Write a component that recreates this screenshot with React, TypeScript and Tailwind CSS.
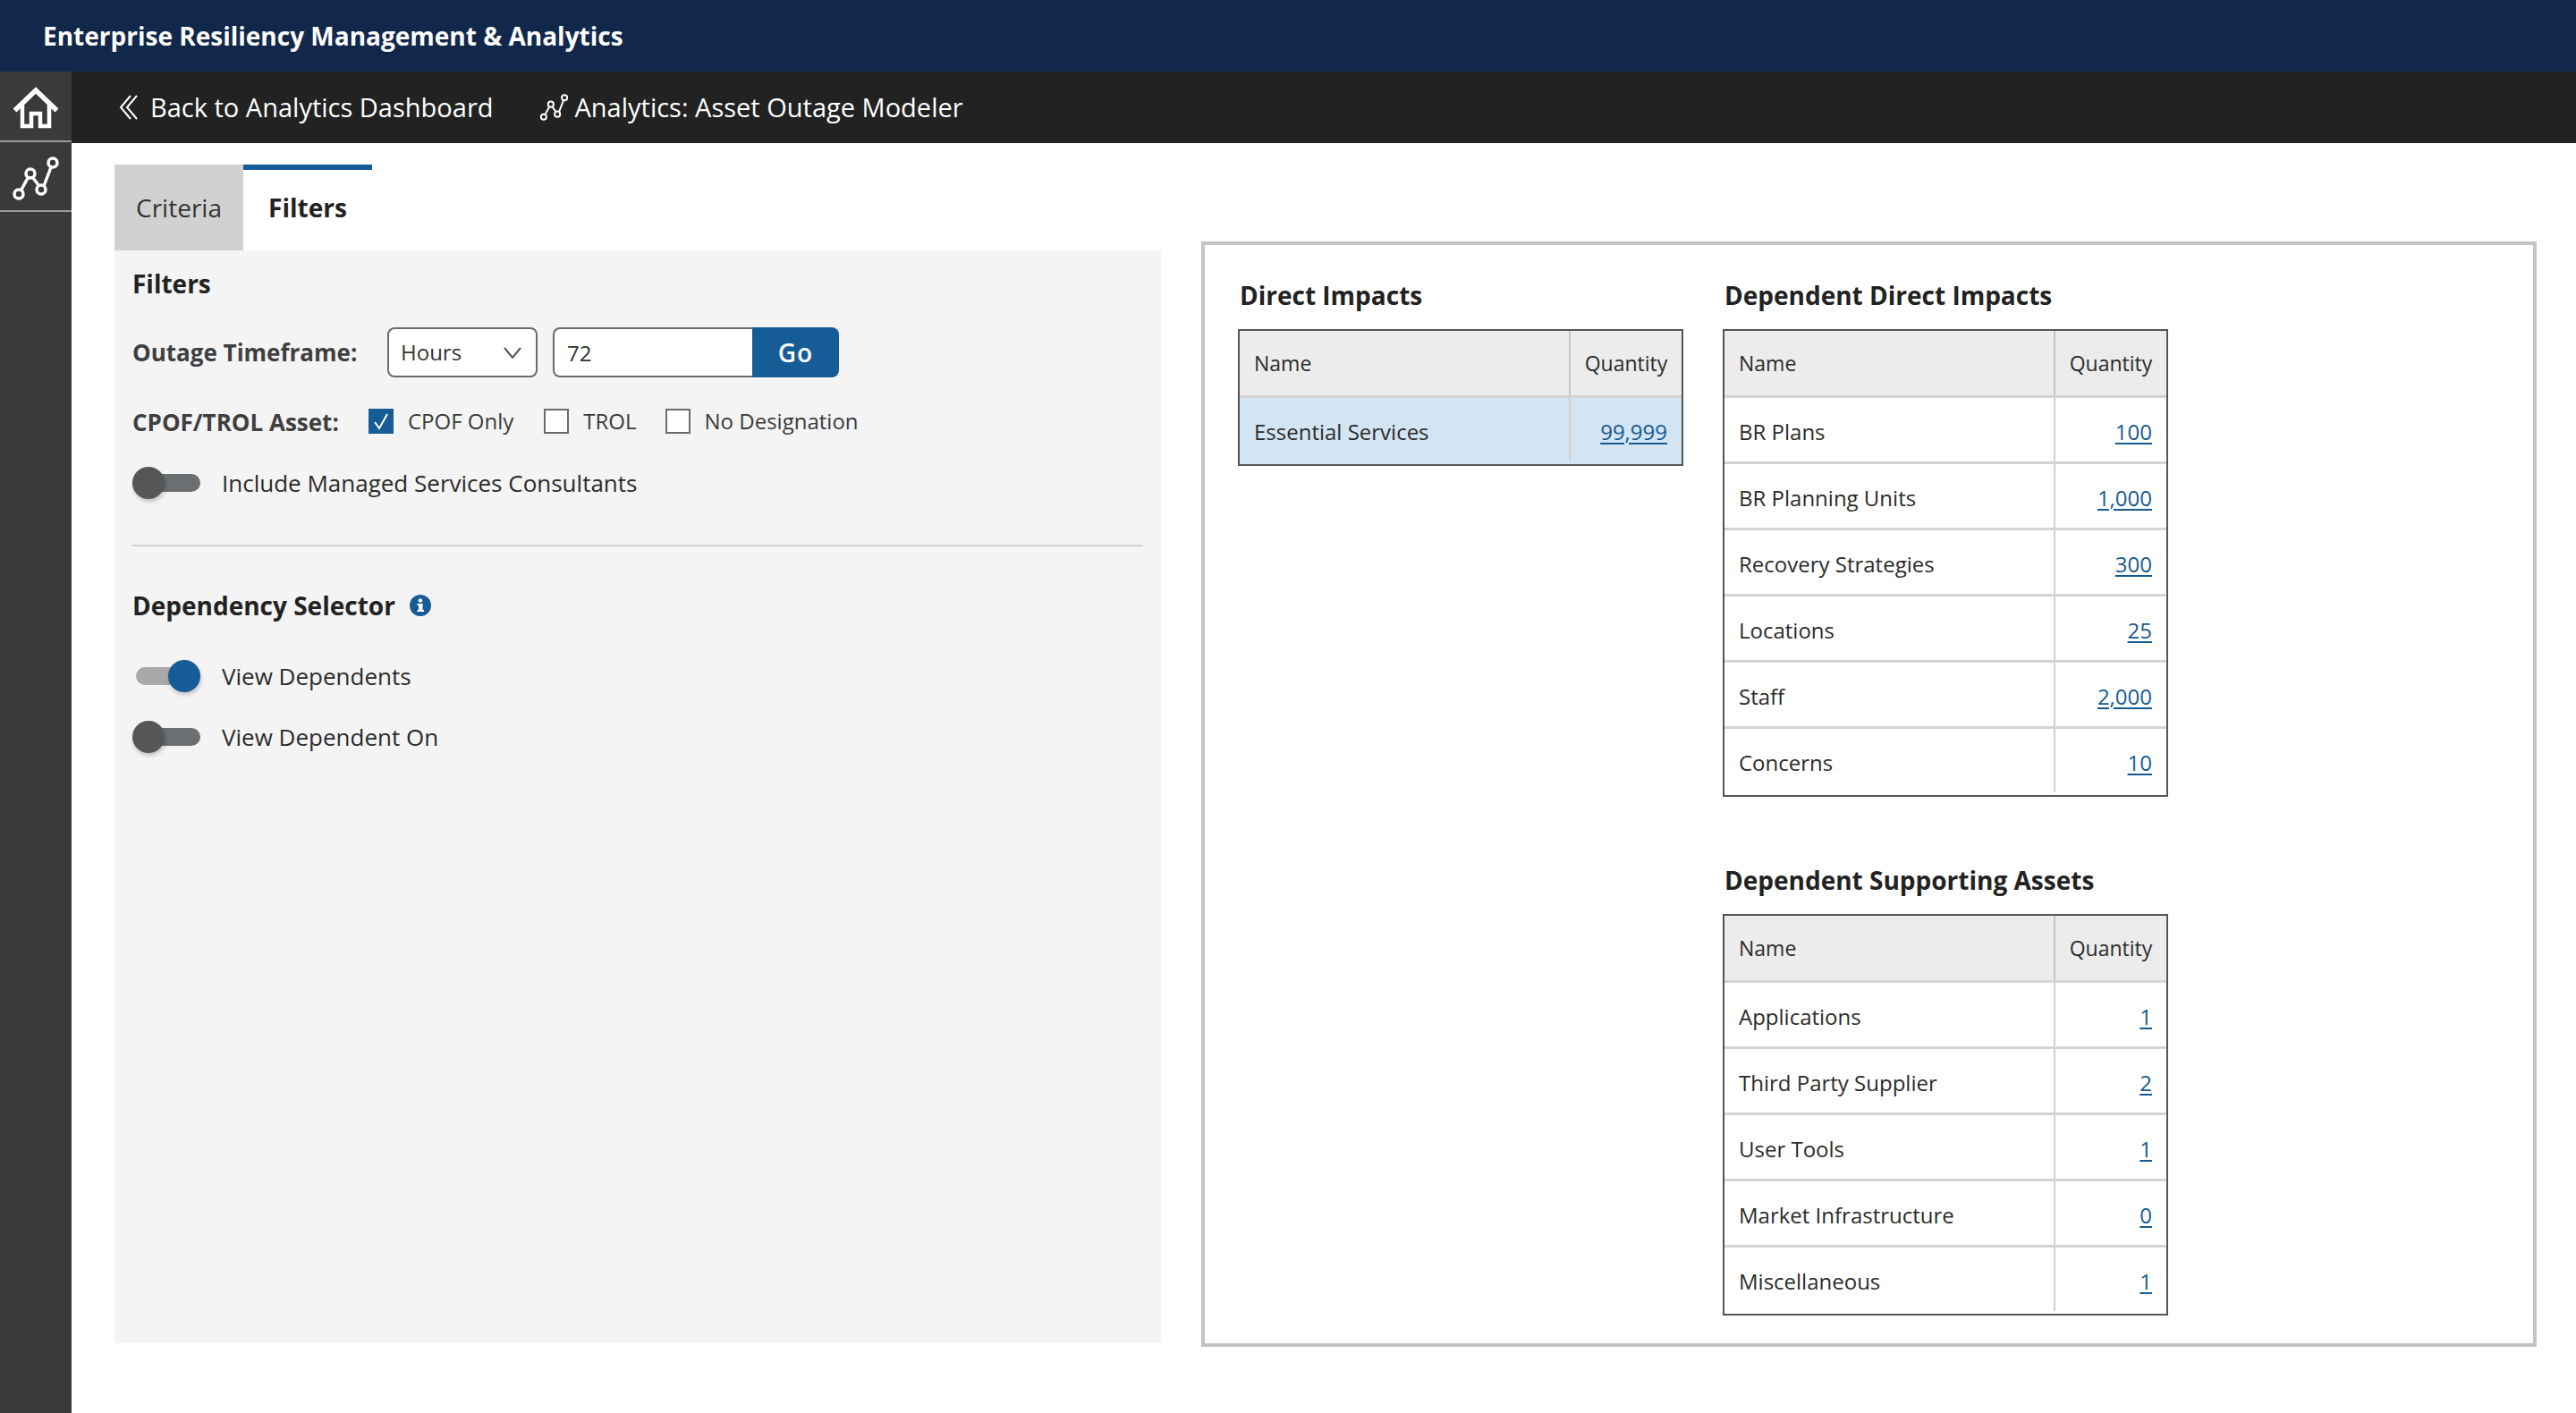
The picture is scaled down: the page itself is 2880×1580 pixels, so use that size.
const BLUE = 'bg-[#165c96]'

const DIRECT = [{ name: 'Essential Services', qty: '99,999' }]
const DEPENDENT = [
  { name: 'BR Plans', qty: '100' },
  { name: 'BR Planning Units', qty: '1,000' },
  { name: 'Recovery Strategies', qty: '300' },
  { name: 'Locations', qty: '25' },
  { name: 'Staff', qty: '2,000' },
  { name: 'Concerns', qty: '10' },
]
const SUPPORTING = [
  { name: 'Applications', qty: '1' },
  { name: 'Third Party Supplier', qty: '2' },
  { name: 'User Tools', qty: '1' },
  { name: 'Market Infrastructure', qty: '0' },
  { name: 'Miscellaneous', qty: '1' },
]

function HomeIcon() {
  return (
    <svg width="80" height="78" viewBox="0 0 80 78" fill="none" stroke="#fff" strokeWidth="4.5">
      <path d="M16.5 43.5 L40 21 L63.5 43.5" strokeWidth="5.5" strokeLinejoin="miter" />
      <path d="M25 37 V61 H35 V47 H45 V61 H55 V37" />
    </svg>
  )
}

function TrendIcon({ stroke = 3.5, className }: { stroke?: number; className?: string }) {
  return (
    <svg viewBox="14 16 52 49" className={className} fill="none" stroke="#fff" strokeWidth={stroke}>
      <path d="M24 53 L31 40 M37 40 L43 48 M49 49 L57 28" />
      <circle cx="21" cy="58" r="5" />
      <circle cx="34" cy="35" r="5" />
      <circle cx="46" cy="53" r="5" />
      <circle cx="59" cy="23" r="5" />
    </svg>
  )
}

function BackIcon() {
  return (
    <svg width="21" height="28" viewBox="0 0 21 28" fill="none" stroke="#fff" strokeWidth="2">
      <path d="M13 1 L2 14 L13 27" />
      <path d="M20 1 L9 14 L20 27" />
    </svg>
  )
}

function Checkbox({ label, checked, className }: { label: string; checked?: boolean; className?: string }) {
  return (
    <div className={`flex items-center gap-4 ${className ?? ''}`}>
      {checked ? (
        <span className={`flex h-7 w-7 items-center justify-center ${BLUE}`}>
          <svg width="18" height="20" viewBox="0 0 18 20" fill="none" stroke="#fff" strokeWidth="2">
            <path d="M2 11 L7 18 L16 2" />
          </svg>
        </span>
      ) : (
        <span className="h-7 w-7 border-2 border-[#6b6b6b] bg-white" />
      )}
      <span className="text-[24px] text-[#3a3a3a]">{label}</span>
    </div>
  )
}

function Toggle({ label, on, className }: { label: string; on?: boolean; className?: string }) {
  return (
    <div className={`flex h-9 items-center ${className ?? ''}`}>
      <div className="relative h-9 w-[76px]">
        <span
          className={`absolute top-2 right-0 h-5 rounded-full ${
            on ? 'left-1 bg-[#a9a9a9]' : 'left-4 bg-[#6c6f72]'
          }`}
        />
        <span
          className={`absolute top-0 h-9 w-9 rounded-full shadow-[1px_3px_4px_rgba(0,0,0,0.2)] ${
            on ? `right-0 ${BLUE}` : 'left-0 bg-[#555756]'
          }`}
        />
      </div>
      <span className="ml-6 text-[26px] text-[#2b2b2b]">{label}</span>
    </div>
  )
}

function ImpactTable({
  rows,
  highlight,
}: {
  rows: { name: string; qty: string }[]
  highlight?: boolean
}) {
  return (
    <div className="w-[498px] border-2 border-[#555] text-[24px] text-[#2b2b2b]">
      <div className="flex h-[75px] border-b-[3px] border-[#d4d4d4] bg-[#ececec] text-[23px] font-medium">
        <div className="flex flex-1 items-center border-r-2 border-[#c4c4c4] pl-4">Name</div>
        <div className="flex w-[124px] items-center justify-center">Quantity</div>
      </div>
      {rows.map((row, i) => {
        const last = i === rows.length - 1
        return (
          <div
            key={row.name}
            className={`flex h-[74px] ${last ? 'pb-[3px]' : 'border-b-[3px] border-[#d4d4d4]'} ${
              highlight ? 'bg-[#d3e4f3]' : 'bg-white'
            }`}
          >
            <div className="flex flex-1 items-center border-r-2 border-[#d0d0d0] pt-1 pl-4">{row.name}</div>
            <div className="flex w-[124px] items-center justify-end pt-1 pr-4">
              <a className="text-[#165a92] underline decoration-2 underline-offset-[3px]">{row.qty}</a>
            </div>
          </div>
        )
      })}
    </div>
  )
}

function FiltersPanel() {
  return (
    <div className="flex-1 bg-[#f4f4f4] px-5 pt-[17px]">
      <h2 className="text-[28px] leading-[40px] font-bold text-[#222]">Filters</h2>
      <div className="mt-[29px] flex h-14 items-center">
        <span className="w-[285px] text-[26px] font-bold text-[#3f3f3f]">Outage Timeframe:</span>
        <div className="flex h-14 w-[168px] items-center justify-between rounded-lg border-2 border-[#6b6b6b] bg-white pr-4 pl-[13px] text-[24px] text-[#333]">
          Hours
          <svg width="20" height="13" viewBox="0 0 20 13" fill="none" stroke="#555" strokeWidth="2">
            <path d="M1 1 L10 12 L19 1" />
          </svg>
        </div>
        <div className="ml-[17px] flex h-14">
          <input
            readOnly
            value="72"
            className="h-14 w-[223px] rounded-l-lg border-2 border-r-0 border-[#6b6b6b] bg-white pl-[14px] text-[24px] text-[#333] outline-none"
          />
          <span
            className={`flex h-14 w-[97px] items-center justify-center rounded-r-lg text-[28px] font-semibold tracking-[1px] text-white ${BLUE}`}
          >
            Go
          </span>
        </div>
      </div>
      <div className="mt-[33px] flex h-8 items-center">
        <span className="w-[264px] pt-0.5 text-[26px] font-bold text-[#3f3f3f]">CPOF/TROL Asset:</span>
        <Checkbox label="CPOF Only" checked />
        <Checkbox label="TROL" className="ml-[34px]" />
        <Checkbox label="No Designation" className="ml-[32px]" />
      </div>
      <Toggle label="Include Managed Services Consultants" className="mt-[35px]" />
      <div className="mt-[51px] h-0.5 bg-[#d2d2d2]" />
      <div className="mt-[46px] flex items-center gap-4">
        <h2 className="text-[28px] leading-[40px] font-bold text-[#222]">Dependency Selector</h2>
        <svg width="24" height="24" viewBox="0 0 24 24">
          <circle cx="12" cy="12" r="12" fill="#165c96" />
          <rect x="10" y="10" width="4.5" height="8.5" fill="#fff" />
          <rect x="8.5" y="10" width="6" height="2" fill="#fff" />
          <rect x="8.5" y="17" width="7.5" height="2" fill="#fff" />
          <circle cx="12" cy="6.5" r="2.3" fill="#fff" />
        </svg>
      </div>
      <Toggle label="View Dependents" on className="mt-[41px]" />
      <Toggle label="View Dependent On" className="mt-8" />
    </div>
  )
}

function SectionTitle({ children, className }: { children: string; className: string }) {
  return <h3 className={`mb-[18px] ml-[2px] text-[28px] leading-[40px] font-bold text-[#222] ${className}`}>{children}</h3>
}

export default function App() {
  return (
    <div className="flex h-[1580px] flex-col bg-white font-['Open_Sans','Noto_Sans',sans-serif]">
      <header className="flex h-20 items-center bg-[#11284a] pl-12 text-[28px] font-bold text-white">
        Enterprise Resiliency Management &amp; Analytics
      </header>
      <div className="flex flex-1">
        <nav className="w-20 bg-[#3a3a3a]">
          <div className="h-[79px] border-b-2 border-[#9a9a9a]">
            <HomeIcon />
          </div>
          <div className="flex h-[78px] items-center justify-center border-b-2 border-[#9a9a9a] pt-1">
            <TrendIcon className="h-[49px] w-[52px]" />
          </div>
        </nav>
        <div className="flex flex-1 flex-col">
          <div className="flex h-20 items-center bg-[#222] pl-[53px] text-[29px] text-white">
            <BackIcon />
            <span className="ml-[14px]">Back to Analytics Dashboard</span>
            <TrendIcon stroke={3.2} className="ml-[52px] h-[30px] w-[33px]" />
            <span className="ml-[6px]">Analytics: Asset Outage Modeler</span>
          </div>
          <main className="flex">
            <section className="mt-6 ml-12 flex h-[1318px] w-[1170px] flex-col">
              <div className="flex h-24">
                <div className="flex w-[144px] items-center justify-center bg-[#d1d1d1] text-[28px] text-[#333]">
                  Criteria
                </div>
                <div className="flex w-[144px] items-center justify-center border-t-[6px] border-[#165c96] pb-1.5 text-[28px] font-bold text-[#222]">
                  Filters
                </div>
              </div>
              <FiltersPanel />
            </section>
            <section className="mt-[110px] ml-[45px] flex h-[1236px] w-[1493px] gap-11 border-4 border-[#c4c4c4] pl-[37px]">
              <div>
                <SectionTitle className="mt-[36px]">Direct Impacts</SectionTitle>
                <ImpactTable rows={DIRECT} highlight />
              </div>
              <div>
                <SectionTitle className="mt-[36px]">Dependent Direct Impacts</SectionTitle>
                <ImpactTable rows={DEPENDENT} />
                <SectionTitle className="mt-[73px]">Dependent Supporting Assets</SectionTitle>
                <ImpactTable rows={SUPPORTING} />
              </div>
            </section>
          </main>
        </div>
      </div>
    </div>
  )
}
